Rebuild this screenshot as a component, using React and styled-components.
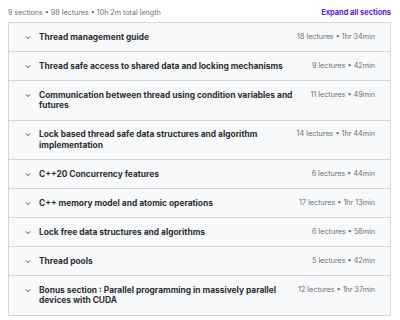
import React from 'react';
import styled, { createGlobalStyle } from 'styled-components';

const COLOR = {
  TEXT: '#2d2f31',
  GRAY: '#6a6f73',
  PURPLE: '#5624d0',
  BG: '#f7f9fa',
  BORDER: '#d1d7dc',
};

const sections = [
  { title: 'Thread management guide', lectures: 18, length: '1hr 34min' },
  { title: 'Thread safe access to shared data and locking mechanisms', lectures: 9, length: '42min' },
  { title: 'Communication between thread using condition variables and futures', lectures: 11, length: '49min' },
  { title: 'Lock based thread safe data structures and algorithm implementation', lectures: 14, length: '1hr 44min' },
  { title: 'C++20 Concurrency features', lectures: 6, length: '44min' },
  { title: 'C++ memory model and atomic operations', lectures: 17, length: '1hr 13min' },
  { title: 'Lock free data structures and algorithms', lectures: 6, length: '58min' },
  { title: 'Thread pools', lectures: 5, length: '42min' },
  { title: 'Bonus section : Parallel programming in massively parallel devices with CUDA', lectures: 12, length: '1hr 37min' },
];

const GlobalStyle = createGlobalStyle`
  body {
    margin: 0;
    background: #fff;
    font-family: Inter, "Liberation Sans", sans-serif;
    color: ${COLOR.TEXT};
  }
`;

const Wrap = styled.div`
  width: 400px;
  height: 320px;
  padding: 5px 9px 0 8px;
  box-sizing: border-box;
`;

const Header = styled.div`
  display: flex;
  justify-content: space-between;
  align-items: center;
  height: 14px;
  margin-bottom: 3px;
`;

const Summary = styled.span`
  font-size: 7.15px;
  color: ${COLOR.GRAY};
`;

const ExpandAll = styled.button`
  border: 0;
  padding: 0;
  background: none;
  font-family: inherit;
  font-size: 7.4px;
  font-weight: 700;
  color: ${COLOR.PURPLE};
  cursor: pointer;
`;

const List = styled.div`
  border: 1px solid ${COLOR.BORDER};
  border-bottom: 0;
`;

const Row = styled.div`
  display: flex;
  align-items: flex-start;
  padding: 8.75px 15px 8.75px 16px;
  background: ${COLOR.BG};
  border-bottom: 1px solid ${COLOR.BORDER};
`;

const Chevron = styled.svg`
  flex: none;
  width: 6px;
  height: 10.5px;
  margin-right: 8px;
  color: ${COLOR.TEXT};
`;

const Title = styled.h3`
  flex: 1;
  margin: 0 12px 0 0;
  font-size: 8.4px;
  line-height: 10.5px;
  font-weight: 700;
`;

const Meta = styled.span`
  flex: none;
  font-size: 7.2px;
  line-height: 10.5px;
  color: ${COLOR.GRAY};
  white-space: nowrap;
`;

function Section({ title, lectures, length }) {
  return (
    <Row>
      <Chevron viewBox="0 0 6 10.5">
        <path d="M1 4.5 L3 6.5 L5 4.5" fill="none" stroke="currentColor" strokeWidth="0.9" />
      </Chevron>
      <Title>{title}</Title>
      <Meta>
        {lectures} lectures • {length}
      </Meta>
    </Row>
  );
}

export default function App() {
  return (
    <Wrap>
      <GlobalStyle />
      <Header>
        <Summary>9 sections • 98 lectures • 10h 2m total length</Summary>
        <ExpandAll>Expand all sections</ExpandAll>
      </Header>
      <List>
        {sections.map(s => (
          <Section key={s.title} {...s} />
        ))}
      </List>
    </Wrap>
  );
}
